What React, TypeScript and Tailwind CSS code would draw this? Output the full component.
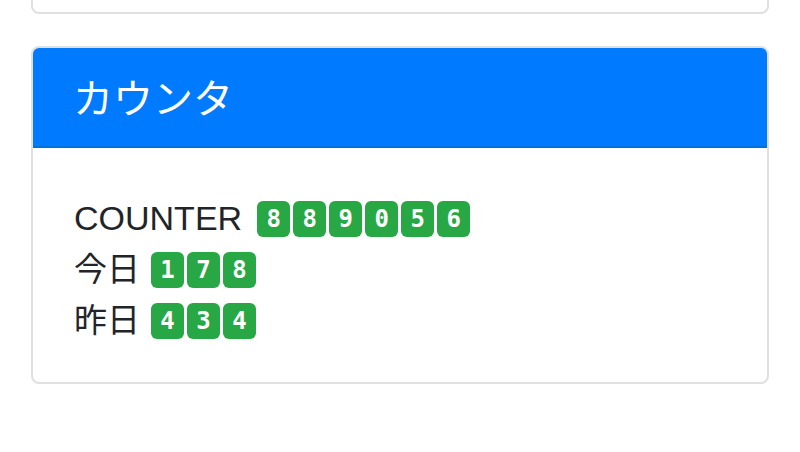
const counters = [
  { label: 'COUNTER', digits: '889056', size: 'text-[34px]', gap: 'ml-[15px]' },
  { label: '今日', digits: '178', size: 'text-[33px]', gap: 'ml-[11px]' },
  { label: '昨日', digits: '434', size: 'text-[33px]', gap: 'ml-[11px]' },
];

function Digits({ value }: { value: string }) {
  return (
    <span className="flex gap-[3px]">
      {value.split('').map((d, i) => (
        <span
          key={i}
          className="flex h-[36px] w-[33px] items-center justify-center rounded-[6px] bg-[#28a745] text-[24px] font-bold leading-none text-white [font-family:'DejaVu_Sans_Mono',monospace]"
        >
          {d}
        </span>
      ))}
    </span>
  );
}

export default function App() {
  return (
    <div className="min-h-[452px] w-full bg-white px-[31px] text-[#212529] [font-family:'Liberation_Sans','Noto_Sans_CJK_JP',sans-serif]">
      {/* previous card, only its bottom edge is visible */}
      <div className="h-[14px] rounded-b-[8px] border-2 border-t-0 border-[#e0e0e0] bg-white" />

      <div className="mt-[32px] overflow-hidden rounded-[8px] border-2 border-[#e0e0e0] bg-white">
        <div className="flex h-[100px] items-center border-b-2 border-[#006fe0] bg-[#007bff] px-[40px] pb-[3px]">
          <h2 className="text-[40px] leading-[48px] text-white [font-family:'Noto_Sans_CJK_JP',sans-serif]">
            カウンタ
          </h2>
        </div>
        <div className="px-[41px] pb-[36px] pt-[45px]">
          {counters.map((c) => (
            <div key={c.label} className="flex h-[51px] items-center">
              <span className={`${c.size} leading-[51px]`}>{c.label}</span>
              <span className={c.gap}>
                <Digits value={c.digits} />
              </span>
            </div>
          ))}
        </div>
      </div>
    </div>
  );
}
